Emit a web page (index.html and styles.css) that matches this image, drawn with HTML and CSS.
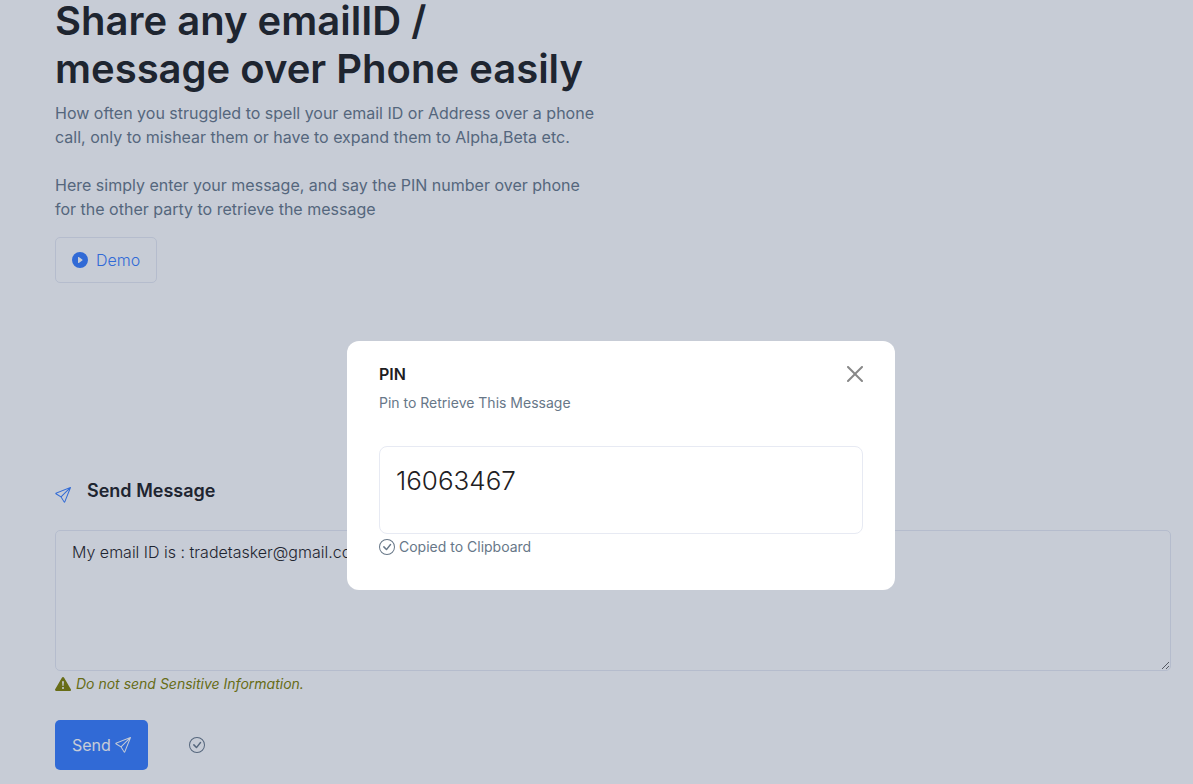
FILE: index.html
```
<!DOCTYPE html>
<html lang="en">
<head>
  <meta charset="UTF-8" />
  <meta name="viewport" content="width=device-width, initial-scale=1.0" />
  <title>Share any emailID / message over Phone easily</title>
  <link rel="stylesheet" href="styles.css">
</head>
<body>
  <!-- Shared icons -->
  <svg class="sprite" aria-hidden="true">
    <symbol id="icon-play" viewBox="0 0 16 16">
      <path d="M16 8A8 8 0 1 1 0 8a8 8 0 0 1 16 0zM6.79 5.093A.5.5 0 0 0 6 5.5v5a.5.5 0 0 0 .79.407l3.5-2.5a.5.5 0 0 0 0-.814l-3.5-2.5z" />
    </symbol>
    <symbol id="icon-send" viewBox="0 0 16 16">
      <path d="M15.854.146a.5.5 0 0 1 .11.54l-5.819 14.547a.75.75 0 0 1-1.329.124l-3.178-4.995L.643 7.184a.75.75 0 0 1 .124-1.33L15.314.037a.5.5 0 0 1 .54.11ZM6.636 10.07l2.761 4.338L14.13 2.576 6.636 10.07Zm6.787-8.201L1.591 6.602l4.339 2.76 7.494-7.493Z" />
    </symbol>
    <symbol id="icon-check" viewBox="0 0 16 16">
      <path d="M8 15A7 7 0 1 1 8 1a7 7 0 0 1 0 14zm0 1A8 8 0 1 0 8 0a8 8 0 0 0 0 16z" />
      <path d="M10.97 4.97a.235.235 0 0 0-.02.022L7.477 9.417 5.384 7.323a.75.75 0 0 0-1.06 1.06L6.97 11.03a.75.75 0 0 0 1.079-.02l3.992-4.99a.75.75 0 0 0-1.071-1.05z" />
    </symbol>
    <symbol id="icon-warning" viewBox="0 0 16 16">
      <path d="M8.982 1.566a1.13 1.13 0 0 0-1.96 0L.165 13.233c-.457.778.091 1.767.98 1.767h13.713c.889 0 1.438-.99.98-1.767L8.982 1.566zM8 5c.535 0 .954.462.9.995l-.35 3.507a.552.552 0 0 1-1.1 0L7.1 5.995A.905.905 0 0 1 8 5zm.002 6a1 1 0 1 1 0 2 1 1 0 0 1 0-2z" />
    </symbol>
    <symbol id="icon-close" viewBox="0 0 16 16">
      <path d="M.293.293a1 1 0 0 1 1.414 0L8 6.586 14.293.293a1 1 0 1 1 1.414 1.414L9.414 8l6.293 6.293a1 1 0 0 1-1.414 1.414L8 9.414l-6.293 6.293a1 1 0 0 1-1.414-1.414L6.586 8 .293 1.707a1 1 0 0 1 0-1.414z" />
    </symbol>
  </svg>

  <main class="container">
    <section class="hero">
      <h1>Share any emailID / message over Phone easily</h1>
      <p>How often you struggled to spell your email ID or Address over a phone call, only to mishear them or have to expand them to Alpha,Beta etc.<br><br>Here simply enter your message, and say the PIN number over phone for the other party to retrieve the message</p>
      <a class="btn btn-outline" href="#demo"><svg class="icon"><use href="#icon-play" /></svg>Demo</a>
    </section>

    <form class="send-form">
      <label class="form-title" for="message"><svg class="icon"><use href="#icon-send" /></svg>Send Message</label>
      <textarea class="form-control message" id="message">My email ID is : tradetasker@gmail.com</textarea>
      <p class="warning"><svg class="icon"><use href="#icon-warning" /></svg><i>Do not send Sensitive Information.</i></p>
      <div class="actions">
        <button type="button" class="btn btn-primary">Send<svg class="icon"><use href="#icon-send" /></svg></button>
        <svg class="icon"><use href="#icon-check" /></svg>
      </div>
    </form>
  </main>

  <div class="backdrop">
    <div class="modal" role="dialog" aria-modal="true" aria-labelledby="pinTitle">
      <div class="modal-header">
        <h2 id="pinTitle">PIN</h2>
        <button type="button" class="btn-close" aria-label="Close"><svg class="icon"><use href="#icon-close" /></svg></button>
      </div>
      <label class="modal-text" for="pin">Pin to Retrieve This Message</label>
      <textarea class="form-control pin" id="pin">16063467</textarea>
      <p class="copied"><svg class="icon"><use href="#icon-check" /></svg>Copied to Clipboard</p>
    </div>
  </div>
</body>
</html>
```
FILE: styles.css
```
* {
  box-sizing: border-box;
}

body {
  margin: 0;
  font-family: Inter, sans-serif;
  font-size: 16px;
  line-height: 24px;
  color: #677788;
  background-color: #fff;
  overflow: hidden;
}

h1, h2, p {
  margin: 0;
}

.sprite {
  display: none;
}

.icon {
  width: 16px;
  height: 16px;
  fill: currentColor;
  flex-shrink: 0;
}

.container {
  margin-top: -3px;
  padding: 0 22px 0 55px;
}

.hero {
  max-width: 546px;
}

.hero h1 {
  font-size: 40px;
  line-height: 48px;
  font-weight: 600;
  color: #1e2022;
  margin-bottom: 8px;
}

.hero p {
  margin-bottom: 16px;
}

.btn {
  display: inline-flex;
  align-items: center;
  padding: 0 16px;
  border: 1px solid transparent;
  border-radius: 5px;
  font: inherit;
  text-decoration: none;
}

.btn-outline {
  height: 46px;
  gap: 8px;
  font-weight: 300;
  color: #377dff;
  border-color: #e7eaf3;
}

.btn-primary {
  height: 50px;
  gap: 4px;
  color: #fff;
  background-color: #377dff;
}

.send-form {
  margin-top: 196px;
}

.form-title {
  display: flex;
  align-items: flex-end;
  gap: 16px;
  margin-bottom: 27px;
  font-size: 18px;
  font-weight: 600;
  color: #1e2022;
}

.form-title .icon {
  color: #377dff;
}

.form-control {
  display: block;
  width: 100%;
  padding: 9px 16px;
  font: inherit;
  font-weight: 300;
  color: #1e2022;
  background-color: transparent;
  border: 1px solid #e7eaf3;
  outline: none;
}

.message {
  height: 141px;
  border-radius: 5px;
}

.warning {
  display: flex;
  align-items: center;
  gap: 5px;
  padding-top: 1px;
  font-size: 14px;
  color: #808000;
}

.actions {
  display: flex;
  align-items: center;
  gap: 41px;
  margin-top: 24px;
}

/* PIN modal */
.backdrop {
  position: fixed;
  inset: 0;
  display: flex;
  align-items: center;
  justify-content: center;
  padding: 147px 0 0 49px;
  background-color: rgba(33, 50, 91, 0.25);
}

.modal {
  width: 548px;
  padding: 17px 32px 31px;
  border-radius: 12px;
  background-color: #fff;
}

.modal-header {
  display: flex;
  align-items: center;
  justify-content: space-between;
}

.modal-header h2 {
  font-size: 16px;
  font-weight: 600;
  color: #1e2022;
}

.btn-close {
  display: flex;
  padding: 8px;
  margin-right: -8px;
  border: 0;
  background: none;
  color: #888;
}

.modal-text {
  display: block;
  padding-top: 1px;
  margin-bottom: 31px;
  font-size: 14px;
}

.pin {
  height: 88px;
  border-radius: 8px;
  padding: 16px;
  font-size: 26px;
  line-height: 36px;
  resize: none;
}

.copied {
  display: flex;
  align-items: center;
  gap: 4px;
  padding-top: 1px;
  font-size: 14px;
}
```
